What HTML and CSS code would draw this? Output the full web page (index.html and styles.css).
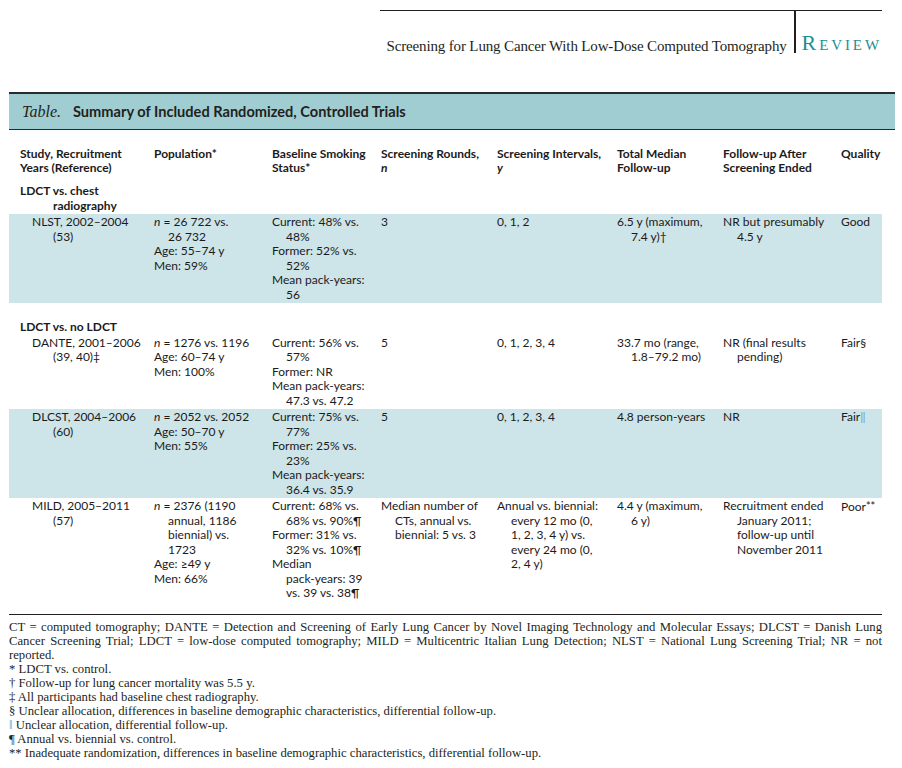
FILE: index.html
```html
<!DOCTYPE html>
<html lang="en">
<head>
<meta charset="utf-8">
<title>Screening for Lung Cancer With Low-Dose Computed Tomography</title>
<link rel="stylesheet" href="styles.css">
</head>
<body>
<header class="masthead">
  <span class="running-title">Screening for Lung Cancer With Low-Dose Computed Tomography</span>
  <span class="rule"></span>
  <span class="section">Review</span>
</header>

<div class="table-title"><em>Table.</em><span class="title-text">Summary of Included Randomized, Controlled Trials</span></div>

<table class="trials">
  <colgroup>
    <col class="c1"><col class="c2"><col class="c3"><col class="c4"><col class="c5"><col class="c6"><col class="c7"><col class="c8">
  </colgroup>
  <thead>
    <tr>
      <th class="first"><div>Study, Recruitment</div><div>Years (Reference)</div></th>
      <th><div>Population*</div></th>
      <th><div>Baseline Smoking</div><div>Status*</div></th>
      <th><div>Screening Rounds,</div><div><i>n</i></div></th>
      <th><div>Screening Intervals,</div><div><i>y</i></div></th>
      <th><div>Total Median</div><div>Follow-up</div></th>
      <th><div>Follow-up After</div><div>Screening Ended</div></th>
      <th><div>Quality</div></th>
    </tr>
  </thead>
  <tbody>
    <tr class="group first-group">
      <td colspan="8"><div>LDCT vs. chest</div><div class="gcont">radiography</div></td>
    </tr>
    <tr class="row shaded">
      <td class="study"><div>NLST, 2002–2004</div><div class="scont">(53)</div></td>
      <td><div><i>n</i> = 26 722 vs.</div><div class="i">26 732</div><div>Age: 55–74 y</div><div>Men: 59%</div></td>
      <td><div>Current: 48% vs.</div><div class="i">48%</div><div>Former: 52% vs.</div><div class="i">52%</div><div>Mean pack-years:</div><div class="i">56</div></td>
      <td><div>3</div></td>
      <td><div>0, 1, 2</div></td>
      <td><div>6.5 y (maximum,</div><div class="i">7.4 y)†</div></td>
      <td><div>NR but presumably</div><div class="i">4.5 y</div></td>
      <td><div>Good</div></td>
    </tr>
    <tr class="group second-group">
      <td colspan="8"><div>LDCT vs. no LDCT</div></td>
    </tr>
    <tr class="row">
      <td class="study"><div>DANTE, 2001–2006</div><div class="scont">(39, 40)‡</div></td>
      <td><div><i>n</i> = 1276 vs. 1196</div><div>Age: 60–74 y</div><div>Men: 100%</div></td>
      <td><div>Current: 56% vs.</div><div class="i">57%</div><div>Former: NR</div><div>Mean pack-years:</div><div class="i">47.3 vs. 47.2</div></td>
      <td><div>5</div></td>
      <td><div>0, 1, 2, 3, 4</div></td>
      <td><div>33.7 mo (range,</div><div class="i">1.8–79.2 mo)</div></td>
      <td><div>NR (final results</div><div class="i">pending)</div></td>
      <td><div>Fair§</div></td>
    </tr>
    <tr class="row shaded">
      <td class="study"><div>DLCST, 2004–2006</div><div class="scont">(60)</div></td>
      <td><div><i>n</i> = 2052 vs. 2052</div><div>Age: 50–70 y</div><div>Men: 55%</div></td>
      <td><div>Current: 75% vs.</div><div class="i">77%</div><div>Former: 25% vs.</div><div class="i">23%</div><div>Mean pack-years:</div><div class="i">36.4 vs. 35.9</div></td>
      <td><div>5</div></td>
      <td><div>0, 1, 2, 3, 4</div></td>
      <td><div>4.8 person-years</div></td>
      <td><div>NR</div></td>
      <td><div>Fair<span class="mark">‖</span></div></td>
    </tr>
    <tr class="row last">
      <td class="study"><div>MILD, 2005–2011</div><div class="scont">(57)</div></td>
      <td><div><i>n</i> = 2376 (1190</div><div class="i">annual, 1186</div><div class="i">biennial) vs.</div><div class="i">1723</div><div>Age: ≥49 y</div><div>Men: 66%</div></td>
      <td><div>Current: 68% vs.</div><div class="i">68% vs. 90%¶</div><div>Former: 31% vs.</div><div class="i">32% vs. 10%¶</div><div>Median</div><div class="i">pack-years: 39</div><div class="i">vs. 39 vs. 38¶</div></td>
      <td><div>Median number of</div><div class="i">CTs, annual vs.</div><div class="i">biennial: 5 vs. 3</div></td>
      <td><div>Annual vs. biennial:</div><div class="i">every 12 mo (0,</div><div class="i">1, 2, 3, 4 y) vs.</div><div class="i">every 24 mo (0,</div><div class="i">2, 4 y)</div></td>
      <td><div>4.4 y (maximum,</div><div class="i">6 y)</div></td>
      <td><div>Recruitment ended</div><div class="i">January 2011;</div><div class="i">follow-up until</div><div class="i">November 2011</div></td>
      <td><div>Poor<span class="stars">**</span></div></td>
    </tr>
  </tbody>
</table>

<footer class="notes">
  <p class="just">CT = computed tomography; DANTE = Detection and Screening of Early Lung Cancer by Novel Imaging Technology and Molecular Essays; DLCST = Danish Lung</p>
  <p class="just">Cancer Screening Trial; LDCT = low-dose computed tomography; MILD = Multicentric Italian Lung Detection; NLST = National Lung Screening Trial; NR = not</p>
  <p>reported.</p>
  <p>* LDCT vs. control.</p>
  <p>† Follow-up for lung cancer mortality was 5.5 y.</p>
  <p>‡ All participants had baseline chest radiography.</p>
  <p>§ Unclear allocation, differences in baseline demographic characteristics, differential follow-up.</p>
  <p><span class="mark">‖</span> Unclear allocation, differential follow-up.</p>
  <p>¶ Annual vs. biennial vs. control.</p>
  <p>** Inadequate randomization, differences in baseline demographic characteristics, differential follow-up.</p>
</footer>
</body>
</html>
```

FILE: styles.css
```css
html, body {
  margin: 0;
  padding: 0;
  background: #ffffff;
  color: #231f20;
}

body {
  width: 902px;
  font-family: "Lato", "Liberation Sans", sans-serif;
}

.masthead {
  margin-left: 380px;
  width: 502px;
  margin-top: 10px;
  height: 42px;
  border-top: 1px solid #231f20;
  display: flex;
  justify-content: flex-end;
  align-items: flex-end;
  font-family: "Liberation Serif", serif;
}

.running-title {
  font-size: 15px;
  line-height: 17px;
  margin-right: 7px;
  margin-bottom: -2px;
  letter-spacing: -0.15px;
}

.rule {
  width: 2px;
  align-self: stretch;
  background: #231f20;
}

.section {
  margin-left: 6px;
  margin-bottom: -1px;
  font-size: 22px;
  line-height: 22px;
  font-variant: small-caps;
  letter-spacing: 2.9px;
  color: #1e8f95;
}

.table-title {
  margin: 39px 0 0 9px;
  width: 873px;
  height: 35px;
  background: #9fcdd1;
  border-top: 2px solid #2a2a2a;
  border-bottom: 1px solid #2a2a2a;
  display: flex;
  align-items: center;
  padding-left: 13px;
  box-sizing: content-box;
}

.table-title em {
  font-family: "Liberation Serif", serif;
  font-size: 16px;
  font-style: italic;
  margin-right: 12px;
}

.title-text {
  font-size: 14.6px;
  font-weight: 700;
}

.trials {
  margin: 16px 0 0 9px;
  width: 873px;
  table-layout: fixed;
  border-collapse: collapse;
  border-bottom: 1px solid #231f20;
  font-size: 12px;
  color: #1c1a1b;
}

.c1 { width: 145px; }
.c2 { width: 118px; }
.c3 { width: 109px; }
.c4 { width: 116px; }
.c5 { width: 120px; }
.c6 { width: 106px; }
.c7 { width: 118px; }
.c8 { width: 41px; }

.trials th,
.trials td {
  padding: 0;
  vertical-align: top;
  text-align: left;
  white-space: nowrap;
}

.trials th {
  font-weight: 700;
  line-height: 14px;
  padding-top: 1px;
  padding-bottom: 9px;
}

.trials th.first,
.trials td.study,
.trials .group td {
  padding-left: 11px;
}

.trials td {
  line-height: 14.5px;
}

.group td {
  font-weight: 700;
}

.first-group td {
  padding-bottom: 1px;
}

.second-group td {
  padding-top: 17px;
}

.gcont {
  padding-left: 33px;
}

.row td {
  padding-top: 1px;
  padding-bottom: 1px;
}

.row.last td {
  padding-bottom: 13px;
}

.shaded td {
  background: #cde4e8;
}

.study div {
  padding-left: 12px;
}

.study .scont {
  padding-left: 33px;
}

.i {
  padding-left: 14px;
}

.mark {
  color: #6f9fbf;
}

.stars {
  font-size: 11px;
  vertical-align: 1px;
}

.notes {
  margin: 5px 0 0 9px;
  width: 873px;
  font-family: "Liberation Serif", serif;
  font-size: 12.7px;
  line-height: 14px;
}

.notes p {
  margin: 0;
  white-space: nowrap;
}

.notes p.just {
  white-space: normal;
  text-align: justify;
  text-align-last: justify;
}
```
